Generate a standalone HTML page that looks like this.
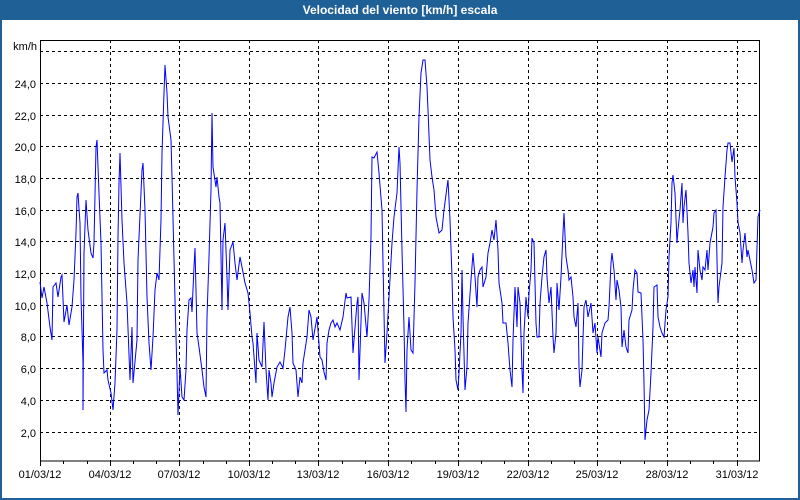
<!DOCTYPE html>
<html><head><meta charset="utf-8"><style>
html,body{margin:0;padding:0;background:#fff}
#w{position:relative;width:800px;height:500px;overflow:hidden;background:#fff;font-family:"Liberation Sans",Tahoma,sans-serif}
</style></head><body><div id="w">
<svg width="800" height="500" xmlns="http://www.w3.org/2000/svg" style="position:absolute;left:0;top:0">
<rect x="0" y="0" width="800" height="500" fill="#1f6096"/>
<rect x="2" y="20" width="796" height="478" fill="#fff"/>
<text x="400" y="14" fill="#fff" font-size="12" font-weight="bold" text-anchor="middle" font-family="Liberation Sans, sans-serif">Velocidad del viento [km/h] escala</text>
<g stroke="#000" stroke-width="1" stroke-dasharray="3,3" fill="none">
<path d="M40 51.5H760M40 83.5H760M40 115.5H760M40 146.5H760M40 178.5H760M40 210.5H760M40 241.5H760M40 273.5H760M40 305.5H760M40 336.5H760M40 368.5H760M40 400.5H760M40 432.5H760"/>
<path d="M110.5 40V461M179.5 40V461M249.5 40V461M318.5 40V461M388.5 40V461M458.5 40V461M528.5 40V461M597.5 40V461M667.5 40V461M737.5 40V461"/>
</g>
<rect x="40.5" y="40.5" width="719" height="420.5" fill="none" stroke="#000"/>
<g stroke="#000"><path d="M40.5 461v5M63.5 461v3M87.5 461v3M110.5 461v5M133.5 461v3M156.5 461v3M179.5 461v5M203.5 461v3M226.5 461v3M249.5 461v5M272.5 461v3M295.5 461v3M318.5 461v5M342.5 461v3M365.5 461v3M388.5 461v5M411.5 461v3M435.5 461v3M458.5 461v5M481.5 461v3M504.5 461v3M528.5 461v5M551.5 461v3M574.5 461v3M597.5 461v5M620.5 461v3M644.5 461v3M667.5 461v5M690.5 461v3M713.5 461v3M737.5 461v5"/></g>
<polyline fill="none" stroke="#0000ff" stroke-width="1" points="40,282 42,298 44,287 47,303 50,327 52,340 53,287 56,283 58,297 61,277 62,275 64,322 67,305 69,325 72,307 74,280 76,233 77,197 78,193 80,223 81,297 83,363 83,410 84,253 86,200 88,230 91,253 93,258 94,243 96,147 97,140 99,193 101,243 103,350 104,373 107,370 108,380 111,393 113,410 115,383 117,330 118,237 119,183 120,153 122,220 124,263 127,303 130,380 132,327 133,383 137,340 138,260 142,170 143,163 145,210 147,297 149,343 151,370 153,337 155,290 157,273 159,280 161,220 162,153 164,93 165,65 167,93 168,117 171,140 172,177 175,300 177,373 178,415 180,367 182,397 184,400 186,370 187,330 189,300 191,298 192,312 194,267 195,248 197,333 199,347 202,370 204,387 206,397 207,317 209,257 211,190 212,113 213,167 216,187 217,177 219,197 220,203 222,310 223,240 225,223 227,277 228,310 230,250 233,242 235,263 237,280 240,257 242,267 245,283 248,293 250,313 252,337 253,343 255,370 256,383 257,333 259,360 262,367 264,322 266,370 268,400 269,370 271,383 272,397 274,383 277,367 280,362 283,368 285,350 288,317 290,307 292,333 293,363 296,370 298,397 300,377 302,383 303,363 307,337 309,310 311,317 313,340 316,323 317,317 320,357 322,360 324,372 326,380 327,343 329,330 331,323 333,320 335,327 337,323 340,330 343,317 346,293 347,298 351,297 353,353 354,340 357,303 358,297 359,380 362,293 364,303 367,337 369,300 371,237 372,157 374,158 377,152 379,173 382,210 383,263 385,363 387,333 389,297 392,243 394,217 397,193 399,147 400,163 402,250 404,327 405,380 406,412 407,350 409,317 411,350 413,353 415,283 417,190 419,117 421,73 423,60 425,60 427,87 428,110 430,160 432,177 434,190 436,217 439,233 442,230 444,210 447,187 448,180 450,220 452,277 453,317 455,350 456,380 458,390 459,373 461,333 462,270 463,317 465,390 467,367 468,323 471,280 473,253 475,277 477,307 478,277 480,270 482,267 483,287 486,277 488,253 490,243 492,230 494,240 496,220 498,250 499,283 502,303 503,323 506,323 508,343 510,370 512,387 513,340 515,287 517,327 518,287 520,303 522,370 523,393 524,333 526,297 528,317 529,293 531,270 532,238 534,243 536,323 537,337 539,337 540,303 542,277 544,257 546,250 547,277 549,303 551,287 553,337 554,353 556,333 557,283 559,310 561,277 563,233 564,213 566,257 568,270 569,280 571,277 573,297 574,317 576,327 578,303 579,367 580,387 582,370 584,307 586,300 588,317 591,303 593,333 595,323 597,353 598,337 601,357 602,333 605,323 608,320 609,307 611,263 612,253 614,270 616,300 617,280 619,290 621,307 622,347 624,330 626,347 628,353 629,320 632,310 633,290 635,270 637,273 638,292 641,293 643,340 644,383 645,440 647,420 649,410 651,373 653,327 654,287 657,285 658,317 660,327 662,333 664,337 666,310 668,297 669,257 671,223 672,183 673,175 675,193 677,243 678,230 680,210 682,183 683,223 684,207 686,190 688,233 689,263 691,283 693,270 694,287 695,267 697,293 698,250 700,270 702,280 703,267 705,270 707,250 708,270 710,243 713,227 714,213 716,210 717,260 718,303 719,287 722,263 723,207 725,177 727,150 728,143 730,143 732,162 734,148 735,177 737,203 738,222 740,233 742,263 743,250 745,233 747,257 748,250 750,260 752,270 754,283 756,280 758,217 760,210"/>
<g font-size="11" fill="#000" text-anchor="end" font-family="Liberation Sans, sans-serif">
<text x="37" y="50">km/h</text>
<text x="36" y="88">24,0</text><text x="36" y="120">22,0</text><text x="36" y="151">20,0</text><text x="36" y="183">18,0</text><text x="36" y="215">16,0</text><text x="36" y="246">14,0</text><text x="36" y="278">12,0</text><text x="36" y="310">10,0</text><text x="36" y="341">8,0</text><text x="36" y="373">6,0</text><text x="36" y="405">4,0</text><text x="36" y="437">2,0</text>
</g>
<g font-size="11" fill="#000" text-anchor="middle" font-family="Liberation Sans, sans-serif">
<text x="40" y="478">01/03/12</text><text x="110" y="478">04/03/12</text><text x="179" y="478">07/03/12</text><text x="249" y="478">10/03/12</text><text x="318" y="478">13/03/12</text><text x="388" y="478">16/03/12</text><text x="458" y="478">19/03/12</text><text x="528" y="478">22/03/12</text><text x="597" y="478">25/03/12</text><text x="667" y="478">28/03/12</text><text x="737" y="478">31/03/12</text>
</g>
</svg>
</div></body></html>
